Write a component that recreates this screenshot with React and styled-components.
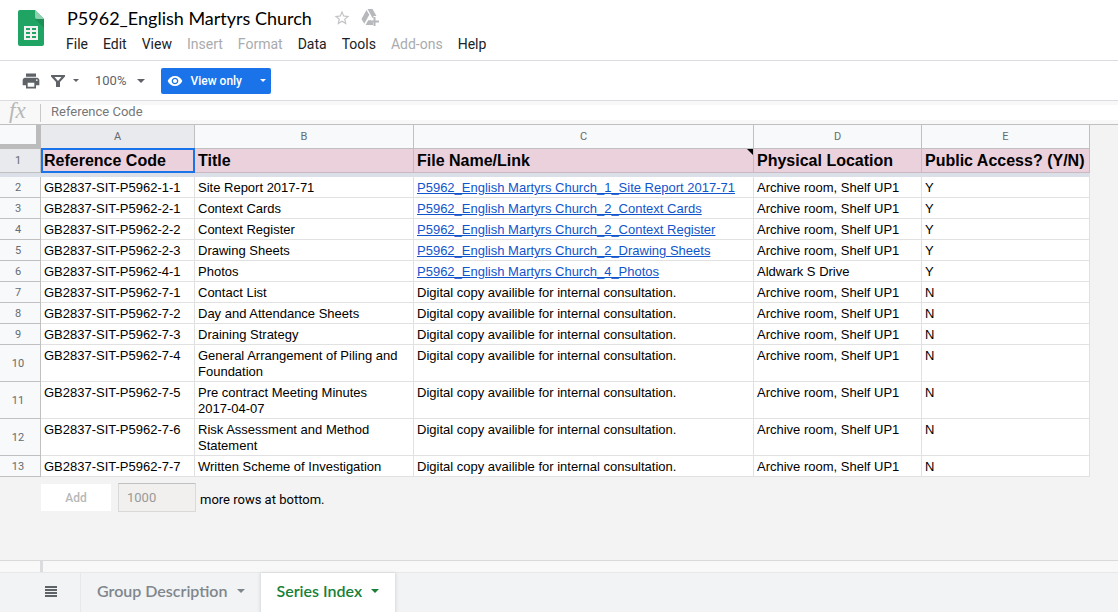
import React from 'react';
import styled, { createGlobalStyle } from 'styled-components';
import { MdPrint, MdVisibility, MdStarBorder } from 'react-icons/md';

const GlobalStyle = createGlobalStyle`
  *, *::before, *::after {
    box-sizing: border-box;
  }

  body {
    margin: 0;
    background: #f3f3f3;
    font-family: Roboto, "Liberation Sans", sans-serif;
  }

  button, input {
    font-family: inherit;
    margin: 0;
  }
`;

const Page = styled.div`
  min-height: 100vh;
  display: flex;
  flex-direction: column;
`;

const Header = styled.header`
  display: flex;
  gap: 15px;
  height: 61px;
  padding-left: 18px;
  background: #fff;
  border-bottom: 1px solid #dadce0;
`;

const Logo = styled.a`
  display: block;
  width: 26px;
  padding-top: 10px;
`;

const HeaderMain = styled.div`
  flex: 1;
`;

const TitleRow = styled.div`
  display: flex;
  align-items: center;
  height: 36px;
  padding: 0 0 1px 8px;
`;

const DocTitle = styled.h1`
  margin: 0 21px 0 0;
  font-family: Lato, sans-serif;
  font-size: 18px;
  font-weight: 400;
  line-height: 24px;
  color: #000;
`;

const IconButton = styled.button`
  display: flex;
  align-items: center;
  padding: 0;
  margin-right: ${(props) => props.$gap || 0}px;
  border: none;
  background: none;
  color: ${(props) => props.$color || '#5f6368'};
  cursor: pointer;
`;

const Menu = styled.nav`
  display: flex;
  height: 16px;
`;

const MenuItem = styled.button`
  padding: 0 8px 0 7px;
  border: none;
  background: none;
  font-size: 14px;
  line-height: 16px;
  color: #202124;

  &:disabled {
    color: #a9abae;
  }
`;

const Toolbar = styled.div`
  display: flex;
  align-items: center;
  height: 40px;
  padding-left: 21px;
  background: #fff;
  border-bottom: 1px solid #dadce0;
`;

const Zoom = styled.button`
  display: flex;
  align-items: center;
  gap: 11px;
  margin-right: 16px;
  padding: 0;
  border: none;
  background: none;
  font-size: 13px;
  line-height: 16px;
  color: #5f6368;
`;

const Caret = styled.span`
  border-left: ${(props) => props.$size || 4}px solid transparent;
  border-right: ${(props) => props.$size || 4}px solid transparent;
  border-top: ${(props) => props.$size || 4}px solid currentColor;
`;

const ViewMode = styled.div`
  display: flex;
  height: 26px;
  border-radius: 2px;
  background: #1a73e8;
  color: #fff;
`;

const ViewButton = styled.button`
  display: flex;
  align-items: center;
  gap: 7px;
  padding: 0 6px;
  border: none;
  background: none;
  font-size: 12px;
  font-weight: 500;
  color: inherit;
`;

const ViewArrow = styled(ViewButton)`
  padding: 0 5px 0 12px;
`;

const FormulaBar = styled.div`
  display: flex;
  align-items: center;
  height: 24px;
  background: #f8f8f8;
  border-bottom: 1px solid #c0c0c0;
`;

const Fx = styled.label`
  width: 41px;
  height: 18px;
  padding-left: 9px;
  border-right: 1px solid #c8c8c8;
  font-family: "Liberation Serif", serif;
  font-size: 23px;
  font-style: italic;
  line-height: 14px;
  color: #b7b7b7;
`;

const FormulaInput = styled.input`
  flex: 1;
  height: 15px;
  margin-left: 10px;
  padding: 0 0 2px;
  border: none;
  background: #fff;
  font-size: 13px;
  color: #777;
`;

const SheetArea = styled.main`
  flex: 1;
`;

const Sheet = styled.table`
  width: 1090px;
  table-layout: fixed;
  border-collapse: separate;
  border-spacing: 0;
  font-family: "Liberation Sans", Arial, sans-serif;
`;

const Corner = styled.td`
  padding: 0;
  background: #f8f9fa;
  border-right: 5px solid #bcbcbc;
  border-bottom: 5px solid #bcbcbc;
`;

const ColHead = styled.th`
  height: 24px;
  padding: 0;
  background: ${(props) => (props.$active ? '#e8eaed' : '#f8f9fa')};
  border-right: 1px solid #c0c0c0;
  border-bottom: 1px solid #c0c0c0;
  font-family: Roboto, sans-serif;
  font-size: 11px;
  font-weight: 400;
  color: #666b70;
`;

const RowHead = styled(ColHead)`
  height: 21px;
  padding-right: 4px;
`;

const TitleCell = styled.td`
  position: relative;
  height: 24px;
  padding: 0 3px;
  background: #ead1dc;
  border-right: 1px solid #cbb9c2;
  border-bottom: 1px solid #cbb9c2;
  font-size: 16px;
  font-weight: 700;
  line-height: 18px;
  white-space: nowrap;
  color: #000;
`;

const Selection = styled.span`
  position: absolute;
  inset: -1px -1px -1px 0;
  border: 2px solid #1a73e8;
  pointer-events: none;
`;

const NoteMark = styled.span`
  position: absolute;
  top: 0;
  right: 0;
  border-top: 6px solid #000;
  border-left: 6px solid transparent;
`;

const FreezeCell = styled.td`
  height: 4px;
  padding: 0;
  background: #dadfe8;
`;

const Cell = styled.td`
  padding: 3px 11px 1px 3px;
  background: #fff;
  border-right: 1px solid #e1e1e1;
  border-bottom: 1px solid #e1e1e1;
  font-size: 13px;
  line-height: 16px;
  vertical-align: top;
  color: #000;
`;

const FileLink = styled.a`
  color: #1155cc;
  text-decoration: underline;
`;

const AddRows = styled.form`
  display: flex;
  align-items: center;
  padding: 6px 0 0 41px;
`;

const AddButton = styled.button`
  width: 70px;
  height: 27px;
  margin-right: 7px;
  border: none;
  background: #fff;
  font-size: 12px;
  font-weight: 500;
  color: #b8b8b8;
`;

const RowCount = styled.input`
  width: 78px;
  height: 29px;
  padding: 0 8px;
  border: 1px solid #d9d9d9;
  border-top-color: #c0c0c0;
  background: #f1f0ee;
  font-size: 13px;
  color: #999;
`;

const AddLabel = styled.label`
  padding: 4px 0 0 4px;
  font-size: 13px;
  line-height: 16px;
  color: #000;
`;

const ScrollStrip = styled.div`
  height: 12px;
  background: #f8f8f8;
  border-top: 1px solid #d9d9d9;

  &::before {
    content: "";
    display: block;
    width: 43px;
    height: 11px;
    border-right: 3px solid #dadce0;
  }
`;

const TabBar = styled.footer`
  display: flex;
  height: 40px;
  background: #f1f3f4;
  border-top: 1px solid #e6e8ea;
`;

const AllSheets = styled.button`
  display: flex;
  align-items: center;
  justify-content: flex-end;
  width: 81px;
  padding: 0 23px 2px 0;
  border: none;
  border-right: 1px solid #e6e8ea;
  background: none;
  color: #5f6368;
`;

const Tab = styled.button`
  display: flex;
  align-items: center;
  gap: 9px;
  padding: 0 16px 4px;
  border: none;
  background: ${(props) => (props.$active ? '#fff' : 'transparent')};
  box-shadow: ${(props) => (props.$active ? '0 1px 3px 1px rgba(60, 64, 67, 0.15)' : 'none')};
  font-family: Lato, sans-serif;
  font-size: 16px;
  font-weight: 600;
  color: ${(props) => (props.$active ? '#188038' : '#80868b')};
`;

const columns = [
  { letter: 'A', title: 'Reference Code', width: 154, selected: true },
  { letter: 'B', title: 'Title', width: 219 },
  { letter: 'C', title: 'File Name/Link', width: 340, note: true },
  { letter: 'D', title: 'Physical Location', width: 168 },
  { letter: 'E', title: 'Public Access? (Y/N)', width: 168 },
];

const internal = 'Digital copy availible for internal consultation.';
const archive = 'Archive room, Shelf UP1';

const rows = [
  { code: '1-1', title: 'Site Report 2017-71', link: 'P5962_English Martyrs Church_1_Site Report 2017-71' },
  { code: '2-1', title: 'Context Cards', link: 'P5962_English Martyrs Church_2_Context Cards' },
  { code: '2-2', title: 'Context Register', link: 'P5962_English Martyrs Church_2_Context Register' },
  { code: '2-3', title: 'Drawing Sheets', link: 'P5962_English Martyrs Church_2_Drawing Sheets' },
  { code: '4-1', title: 'Photos', link: 'P5962_English Martyrs Church_4_Photos', location: 'Aldwark S Drive' },
  { code: '7-1', title: 'Contact List' },
  { code: '7-2', title: 'Day and Attendance Sheets' },
  { code: '7-3', title: 'Draining Strategy' },
  { code: '7-4', title: 'General Arrangement of Piling and Foundation' },
  { code: '7-5', title: 'Pre contract Meeting Minutes 2017-04-07' },
  { code: '7-6', title: 'Risk Assessment and Method Statement' },
  { code: '7-7', title: 'Written Scheme of Investigation' },
];

const menus = [
  { label: 'File' },
  { label: 'Edit' },
  { label: 'View' },
  { label: 'Insert', disabled: true },
  { label: 'Format', disabled: true },
  { label: 'Data' },
  { label: 'Tools' },
  { label: 'Add-ons', disabled: true },
  { label: 'Help' },
];

function SheetsLogo() {
  return (
    <svg width="26" height="36" viewBox="0 0 26 36">
      <path d="M2 0h15l9 9v25a2 2 0 0 1-2 2H2a2 2 0 0 1-2-2V2a2 2 0 0 1 2-2z" fill="#20a464" />
      <path d="M17 9h9v9z" fill="#1c8f57" />
      <path d="M17 0l9 9h-7a2 2 0 0 1-2-2z" fill="#8ed1b1" />
      <path
        d="M6 16h14v14H6zM8 18v2h4v-2zM14 18v2h4v-2zM8 22v2h4v-2zM14 22v2h4v-2zM8 26v2h4v-2zM14 26v2h4v-2z"
        fill="#f1f1f1"
        fillRule="evenodd"
      />
    </svg>
  );
}

function DriveIcon() {
  return (
    <svg width="18" height="17" viewBox="0 0 18 17" fill="currentColor">
      <path d="M5.500 1l2.800 4.800-5 9L.5 10z" />
      <path d="M6.500 0h5l4 7h-3v2h-1z" />
      <path d="M7.200 11.200h2.900v2h2V16H4.600z" />
      <path d="M12.500 8h2v3.500H18v2h-3.500V17h-2v-3.500H9v-2h3.500z" />
    </svg>
  );
}

function FilterIcon() {
  return (
    <svg width="14" height="12" viewBox="0 0 14 12">
      <path d="M0 0h14v1.500L9 7v5H5V7L0 1.500zM3.500 2l3.500 4 3.500-4z" fill="currentColor" fillRule="evenodd" />
    </svg>
  );
}

function App() {
  return (
    <Page>
      <GlobalStyle />
      <Header>
        <Logo href="#" aria-label="Sheets home">
          <SheetsLogo />
        </Logo>
        <HeaderMain>
          <TitleRow>
            <DocTitle>P5962_English Martyrs Church</DocTitle>
            <IconButton aria-label="Star" $gap={10} $color="#c2c4c7">
              <MdStarBorder size={18} />
            </IconButton>
            <IconButton aria-label="Add to Drive" $color="#b6b8bb">
              <DriveIcon />
            </IconButton>
          </TitleRow>
          <Menu>
            {menus.map((menu) => (
              <MenuItem key={menu.label} disabled={menu.disabled}>{menu.label}</MenuItem>
            ))}
          </Menu>
        </HeaderMain>
      </Header>
      <Toolbar>
        <IconButton aria-label="Print" $gap={10}>
          <MdPrint size={20} />
        </IconButton>
        <IconButton aria-label="Filter" $gap={8}>
          <FilterIcon />
        </IconButton>
        <IconButton aria-label="Filter views" $gap={16}>
          <Caret $size={3} />
        </IconButton>
        <Zoom>
          100%
          <Caret />
        </Zoom>
        <ViewMode>
          <ViewButton>
            <MdVisibility size={16} />
            View only
          </ViewButton>
          <ViewArrow aria-label="View options">
            <Caret $size={3} />
          </ViewArrow>
        </ViewMode>
      </Toolbar>
      <FormulaBar>
        <Fx htmlFor="formula">fx</Fx>
        <FormulaInput id="formula" defaultValue="Reference Code" />
      </FormulaBar>
      <SheetArea>
        <Sheet>
          <colgroup>
            <col width="41" />
            {columns.map((column) => (
              <col key={column.letter} width={column.width} />
            ))}
          </colgroup>
          <thead>
            <tr>
              <Corner />
              {columns.map((column) => (
                <ColHead key={column.letter} $active={column.selected}>{column.letter}</ColHead>
              ))}
            </tr>
          </thead>
          <tbody>
            <tr>
              <RowHead $active>1</RowHead>
              {columns.map((column) => (
                <TitleCell key={column.letter}>
                  {column.title}
                  {column.selected && <Selection />}
                  {column.note && <NoteMark />}
                </TitleCell>
              ))}
            </tr>
            <tr>
              <FreezeCell colSpan={6} />
            </tr>
            {rows.map((row, index) => (
              <tr key={row.code}>
                <RowHead>{index + 2}</RowHead>
                <Cell>GB2837-SIT-P5962-{row.code}</Cell>
                <Cell>{row.title}</Cell>
                <Cell>{row.link ? <FileLink href="#">{row.link}</FileLink> : internal}</Cell>
                <Cell>{row.location || archive}</Cell>
                <Cell>{row.link ? 'Y' : 'N'}</Cell>
              </tr>
            ))}
          </tbody>
        </Sheet>
        <AddRows>
          <AddButton type="button" disabled>Add</AddButton>
          <RowCount id="row-count" defaultValue="1000" disabled />
          <AddLabel htmlFor="row-count">more rows at bottom.</AddLabel>
        </AddRows>
      </SheetArea>
      <ScrollStrip />
      <TabBar>
        <AllSheets aria-label="All sheets">
          <svg width="12" height="11" viewBox="0 0 12 11" fill="currentColor">
            <path d="M0 0h12v2H0zM0 3h12v2H0zM0 6h12v2H0zM0 9h12v2H0z" />
          </svg>
        </AllSheets>
        <Tab>
          Group Description
          <Caret />
        </Tab>
        <Tab $active>
          Series Index
          <Caret />
        </Tab>
      </TabBar>
    </Page>
  );
}

export default App;
